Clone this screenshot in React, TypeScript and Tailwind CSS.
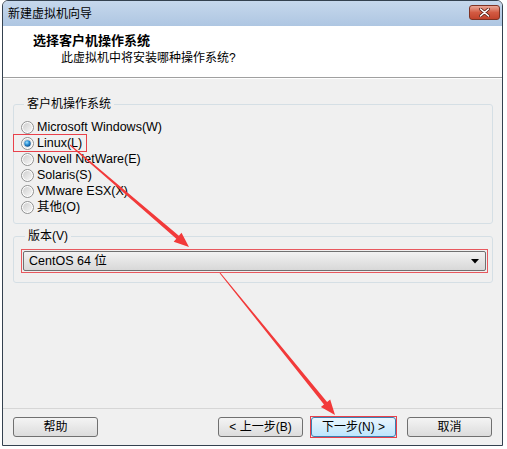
import React from 'react';

const font = { fontFamily: '"Liberation Sans", "Noto Sans CJK SC", sans-serif' };

type Pt = [number, number];

// tapered arrow: thin at the tail, thick near the head
function arrowPoints(from: Pt, to: Pt, headLen = 15, headHalf = 6, tail = 0.5, neck = 2): string {
  const [x1, y1] = from;
  const [x2, y2] = to;
  const len = Math.hypot(x2 - x1, y2 - y1);
  const ux = (x2 - x1) / len;
  const uy = (y2 - y1) / len;
  const px = -uy;
  const py = ux;
  const bx = x2 - ux * headLen;
  const by = y2 - uy * headLen;
  const pts: Pt[] = [
    [x1 + px * tail, y1 + py * tail],
    [bx + px * neck, by + py * neck],
    [bx + px * headHalf, by + py * headHalf],
    [x2, y2],
    [bx - px * headHalf, by - py * headHalf],
    [bx - px * neck, by - py * neck],
    [x1 - px * tail, y1 - py * tail],
  ];
  return pts.map((p) => `${p[0].toFixed(1)},${p[1].toFixed(1)}`).join(' ');
}

const Radio: React.FC<{ checked?: boolean }> = ({ checked }) => (
  <svg width="13" height="13" viewBox="0 0 13 13">
    <defs>
      <linearGradient id={checked ? 'rg-on' : 'rg-off'} x1="0" y1="0" x2="1" y2="1">
        <stop offset="0" stopColor="#cfcfcf" />
        <stop offset="1" stopColor="#f6f6f6" />
      </linearGradient>
      <radialGradient id="dot" cx="0.4" cy="0.35" r="0.7">
        <stop offset="0" stopColor="#9fe2ff" />
        <stop offset="0.5" stopColor="#2b8fd6" />
        <stop offset="1" stopColor="#0a4a85" />
      </radialGradient>
    </defs>
    <circle cx="6.5" cy="6.5" r="6" fill="#ffffff" stroke="#8e8f8f" strokeWidth="1" />
    <circle cx="6.5" cy="6.5" r="4.5" fill={`url(#${checked ? 'rg-on' : 'rg-off'})`} />
    {checked && <circle cx="6.5" cy="6.5" r="3.2" fill="url(#dot)" />}
  </svg>
);

const Button: React.FC<{ label: string; className?: string; active?: boolean }> = ({ label, className = '', active }) => (
  <div
    className={
      'w-[85px] h-[20px] flex items-center justify-center rounded-[3px] border text-[12px] text-black ' +
      (active
        ? 'border-[#3c7fb1] bg-gradient-to-b from-[#eaf6fd] to-[#bee6fd] '
        : 'border-[#707070] bg-gradient-to-b from-[#f4f4f4] to-[#dcdcdc] ') +
      className
    }
  >
    {label}
  </div>
);

const options = [
  { label: 'Microsoft Windows(W)' },
  { label: 'Linux(L)', checked: true },
  { label: 'Novell NetWare(E)' },
  { label: 'Solaris(S)' },
  { label: 'VMware ESX(X)' },
  { label: '其他(O)' },
];

export default function App() {
  return (
    <div className="relative w-[507px] h-[449px] bg-white overflow-hidden" style={font}>
      <div className="ml-[2px] w-[501px] h-[446px] border border-[#34414f] rounded-t-[6px] overflow-hidden flex flex-col bg-[#f0f0f0]">
        {/* title bar */}
        <div className="h-[25px] flex items-center pl-[5px] pr-[2px] bg-gradient-to-b from-[#c6d8ec] to-[#aec6e2]">
          <span className="text-[12px] text-black mt-[1px]">新建虚拟机向导</span>
          <div className="ml-auto mb-[3px] w-[31px] h-[15px] rounded-[3px] border border-[#7e3324] bg-gradient-to-b from-[#e9a797] via-[#d35a42] to-[#c2432c] flex items-center justify-center">
            <svg width="11" height="9" viewBox="0 0 11 9">
              <path d="M1.5 1 L9.5 8 M9.5 1 L1.5 8" stroke="#5a1f14" strokeWidth="3" strokeLinecap="round" />
              <path d="M1.5 1 L9.5 8 M9.5 1 L1.5 8" stroke="#ffffff" strokeWidth="1.6" strokeLinecap="round" />
            </svg>
          </div>
        </div>

        {/* header */}
        <div className="h-[52px] bg-white border-b border-[#a0a0a0] pt-[7px]">
          <div className="pl-[30px] text-[13px] leading-[16px] font-bold text-black">选择客户机操作系统</div>
          <div className="pl-[58px] mt-[1px] text-[12px] leading-[16px] text-black">此虚拟机中将安装哪种操作系统?</div>
        </div>

        {/* body */}
        <div className="flex-1 flex flex-col border-t border-white px-[10px]">
          <fieldset className="mt-[17px] w-[480px] border border-[#d5dfe5] rounded-[3px] pl-[7px] pt-[7px] pb-[8px]">
            <legend className="ml-[3px] px-[3px] text-[12px] leading-[16px] text-black">客户机操作系统</legend>
            {options.map((o) => (
              <div key={o.label} className="h-[16px] flex items-center">
                <div
                  className={
                    'flex items-center gap-[3px] h-[16px] ' +
                    (o.checked ? 'outline outline-1 outline-[#e8414b] -ml-[7px] pl-[7px] pr-[2px] w-[72px]' : '')
                  }
                >
                  <Radio checked={o.checked} />
                  <span className="text-[12.5px] text-black leading-[16px]">{o.label}</span>
                </div>
              </div>
            ))}
          </fieldset>

          <fieldset className="mt-[4px] w-[480px] border border-[#d5dfe5] rounded-[3px] pl-[7px] pr-[4px] pt-[5px] pb-[9px]">
            <legend className="ml-[4px] px-[3px] text-[12px] leading-[16px] text-black">版本(V)</legend>
            <div className="border border-[#e8585e] p-[1px]">
              <div className="h-[20px] rounded-[2px] border border-[#707070] bg-gradient-to-b from-[#f2f2f2] to-[#d8d8d8] flex items-center pl-[5px] pr-[6px]">
                <span className="text-[12.5px] text-black">CentOS 64 位</span>
                <svg className="ml-auto" width="8" height="5" viewBox="0 0 8 5">
                  <path d="M0 0 H8 L4 4.5 Z" fill="#000000" />
                </svg>
              </div>
            </div>
          </fieldset>

          <div className="mt-auto -mx-[10px] border-t border-[#d6d6d6] pt-[8px] pb-[8px] px-[10px] flex items-center">
            <Button label="帮助" />
            <Button label="< 上一步(B)" className="ml-[120px]" />
            <div className="ml-[8px] outline outline-1 outline-[#e8414b]">
              <Button label="下一步(N) >" active />
            </div>
            <Button label="取消" className="ml-[11px]" />
          </div>
        </div>
      </div>

      {/* annotation arrows */}
      <svg className="absolute inset-0 pointer-events-none" width="507" height="449" viewBox="0 0 507 449">
        <polygon points={arrowPoints([70, 145], [189, 247])} fill="#f23a3a" />
        <polygon points={arrowPoints([220, 273], [335, 415])} fill="#f23a3a" />
      </svg>
    </div>
  );
}
